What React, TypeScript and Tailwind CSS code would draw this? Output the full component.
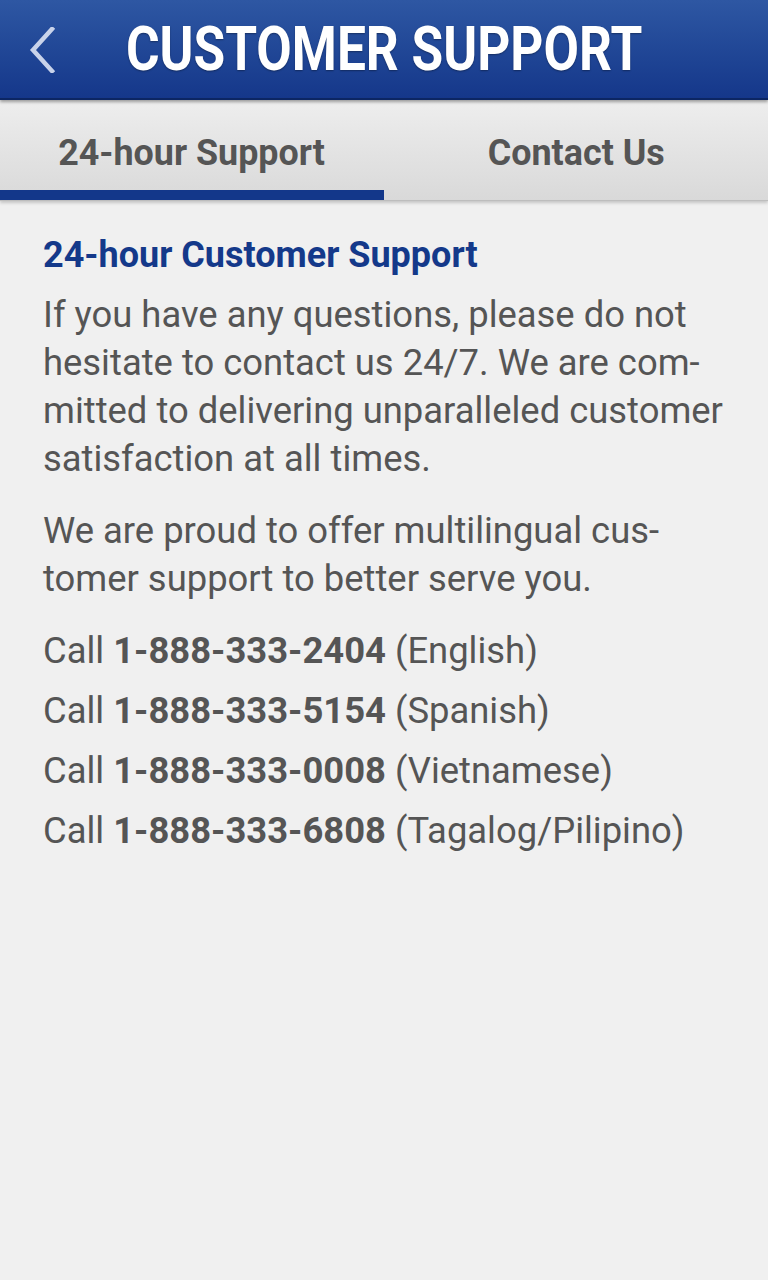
import React from "react";

const font = { fontFamily: "Roboto, 'Noto Sans', sans-serif" };

export default function App() {
  return (
    <div className="w-[768px] h-[1280px] bg-[#f0f0f0] flex flex-col" style={font}>
      {/* Header */}
      <div className="relative h-[100px] bg-gradient-to-b from-[#2e57a3] to-[#15378a] border-b-2 border-[#0c2663] flex items-center justify-center z-20 shadow-[0_2px_3px_rgba(0,0,0,0.35)]">
        <svg className="absolute left-[28px] top-[27px]" width="28" height="46" viewBox="0 0 28 46">
          <polyline points="24,2 5,23 24,44" fill="none" stroke="#c9d3ea" strokeWidth="4.5" strokeLinecap="square" />
        </svg>
        <span className="text-white font-bold text-[62px] leading-none inline-block scale-x-[0.83] [text-shadow:0_1px_2px_rgba(0,0,0,0.35)]">
          CUSTOMER SUPPORT
        </span>
      </div>
      {/* Tabs */}
      <div className="relative h-[101px] bg-gradient-to-b from-[#eeeeee] to-[#d9d9d9] flex border-b border-[#bdbdbd] shadow-[0_2px_3px_rgba(0,0,0,0.18)] z-10">
        <div className="relative w-1/2 flex items-center justify-center pt-[4px]">
          <span className="text-[#555555] font-bold text-[37px] leading-none inline-block scale-x-[0.97]">24-hour Support</span>
          <div className="absolute left-0 right-0 bottom-0 h-[10px] bg-[#13378a]" />
        </div>
        <div className="relative w-1/2 flex items-center justify-center pt-[4px]">
          <span className="text-[#555555] font-bold text-[37px] leading-none inline-block scale-x-[0.97]">Contact Us</span>
        </div>
      </div>
      {/* Content */}
      <div className="px-[43px] pt-[30px] text-[#555555] text-[36.4px] leading-[48px]">
        <h2 className="text-[#14398a] font-bold text-[36px] leading-[48px]">24-hour Customer Support</h2>
        <p className="mt-[12px] whitespace-nowrap">
          If you have any questions, please do not<br />
          hesitate to contact us 24/7. We are com-<br />
          mitted to delivering unparalleled customer<br />
          satisfaction at all times.
        </p>
        <p className="mt-[24px] whitespace-nowrap">
          We are proud to offer multilingual cus-<br />
          tomer support to better serve you.
        </p>
        <div className="mt-[18px] flex flex-col whitespace-nowrap">
          <div className="leading-[60px]">Call <b>1-888-333-2404</b> (English)</div>
          <div className="leading-[60px]">Call <b>1-888-333-5154</b> (Spanish)</div>
          <div className="leading-[60px]">Call <b>1-888-333-0008</b> (Vietnamese)</div>
          <div className="leading-[60px]">Call <b>1-888-333-6808</b> (Tagalog/Pilipino)</div>
        </div>
      </div>
    </div>
  );
}
